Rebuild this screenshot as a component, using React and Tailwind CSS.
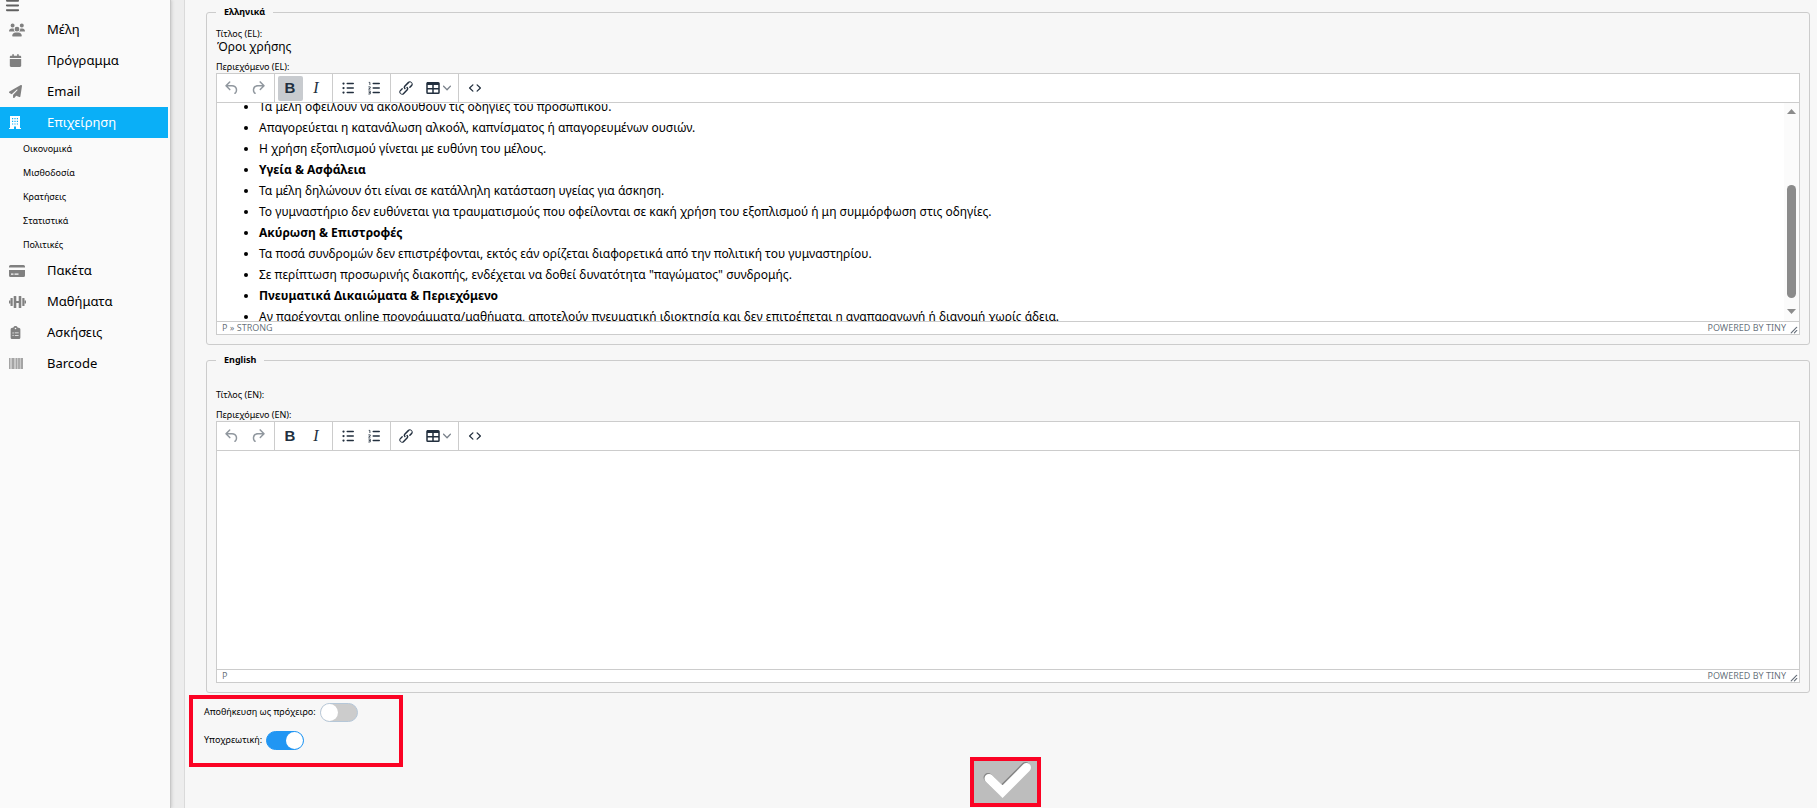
import React, { useState } from 'react';
import { FaBars, FaCalendar, FaClipboardList, FaPaperPlane, FaUsers } from 'react-icons/fa6';

const BuildingIcon = () => (
  <svg width="12" height="13" viewBox="0 0 12 13" fill="currentColor" aria-hidden="true">
    <path
      fillRule="evenodd"
      d="M1 0h10v12h1v1H7v-2.500H5V13H0v-1h1zM3 2v1.200h1.200V2zM5.400 2v1.200h1.200V2zM7.800 2v1.200H9V2zM3 4.700v1.200h1.200V4.700zM5.400 4.700v1.200h1.200V4.700zM7.800 4.700v1.200H9V4.700zM3 7.400v1.200h1.200V7.400zM5.400 7.400v1.200h1.200V7.400zM7.800 7.400v1.200H9V7.400z"
    />
  </svg>
);

const DumbbellIcon = () => (
  <svg width="17" height="12" viewBox="0 0 17 12" fill="currentColor" aria-hidden="true">
    <rect x="0" y="4.500" width="1.500" height="3" />
    <rect x="1.500" y="2" width="2.200" height="8" rx="0.6" />
    <rect x="4.700" y="0" width="2.600" height="12" rx="0.6" />
    <rect x="7" y="5" width="3" height="2" />
    <rect x="9.700" y="0" width="2.600" height="12" rx="0.6" />
    <rect x="13.300" y="2" width="2.200" height="8" rx="0.6" />
    <rect x="15.500" y="4.500" width="1.500" height="3" />
  </svg>
);

const CardIcon = () => (
  <svg width="16" height="12" viewBox="0 0 16 12" fill="currentColor" aria-hidden="true">
    <path d="M1.500 0h13A1.500 1.500 0 0 1 16 1.500V2.500H0V1.500A1.500 1.500 0 0 1 1.500 0z" />
    <path
      fillRule="evenodd"
      d="M0 5h16v5.500a1.500 1.500 0 0 1-1.500 1.500h-13A1.500 1.500 0 0 1 0 10.500zM2 8.500v1.200h2.500V8.500zM5.500 8.500v1.200h4V8.500z"
    />
  </svg>
);

const BarcodeIcon = () => (
  <svg width="14" height="11" viewBox="0 0 14 11" fill="currentColor" aria-hidden="true">
    <rect width="14" height="11" opacity="0.4" />
    <rect x="0" width="1" height="11" opacity="0.5" />
    <rect x="3" width="2" height="11" opacity="0.5" />
    <rect x="7" width="1" height="11" opacity="0.5" />
    <rect x="9" width="2" height="11" opacity="0.4" />
    <rect x="12" width="2" height="11" opacity="0.5" />
  </svg>
);

const businessLinks = ['Οικονομικά', 'Μισθοδοσία', 'Κρατήσεις', 'Στατιστικά', 'Πολιτικές'];

const menu = [
  { label: 'Μέλη', icon: <FaUsers size={16} /> },
  { label: 'Πρόγραμμα', icon: <FaCalendar size={13} /> },
  { label: 'Email', icon: <FaPaperPlane size={13} /> },
  { label: 'Επιχείρηση', icon: <BuildingIcon />, active: true, children: businessLinks },
  { label: 'Πακέτα', icon: <CardIcon /> },
  { label: 'Μαθήματα', icon: <DumbbellIcon /> },
  { label: 'Ασκήσεις', icon: <FaClipboardList size={13} /> },
  { label: 'Barcode', icon: <BarcodeIcon /> },
];

const Sidebar = () => (
  <nav className="w-[171px] shrink-0 border-r border-[#c8c8c8] bg-[#fafafa] pr-[2px] shadow-[1px_0_3px_#cccccc]">
    <button type="button" aria-label="Menu" className="flex h-[14px] items-start pl-[5px] text-[#606060]">
      <FaBars size={15} className="-mt-[2px]" />
    </button>
    <ul>
      {menu.map((item) => (
        <li key={item.label}>
          <a
            href="#"
            className={`flex h-[31px] items-center text-[13px] ${
              item.active ? 'bg-[#0aaff7] text-white' : 'text-black'
            }`}
          >
            <span className={`flex w-[47px] items-center pl-[9px] ${item.active ? 'text-white' : 'text-[#808080]'}`}>
              {item.icon}
            </span>
            {item.label}
          </a>
          {item.children && (
            <ul className="-my-px flex flex-col gap-px">
              {item.children.map((child) => (
                <li key={child}>
                  <a href="#" className="flex h-[23px] items-center pl-[23px] text-[9px] text-black">
                    {child}
                  </a>
                </li>
              ))}
            </ul>
          )}
        </li>
      ))}
    </ul>
  </nav>
);

const Icon = ({ d }) => (
  <svg width="18" height="18" viewBox="0 0 24 24" fill="currentColor" aria-hidden="true">
    <path d={d} />
  </svg>
);

const UNDO =
  'M6.4 8H12c3.7 0 6.2 2 6.8 5.1.6 2.7-.4 5.6-2.3 6.8a1 1 0 01-1-1.8c1.1-.6 1.8-2.7 1.4-4.6-.5-2.1-2.1-3.500-4.9-3.500H6.4l3.3 3.3a1 1 0 11-1.4 1.4l-5-5a1 1 0 010-1.4l5-5a1 1 0 011.4 1.4L6.4 8z';
const REDO =
  'M17.6 10H12c-2.8 0-4.4 1.4-4.9 3.5-.4 2 .3 4 1.4 4.6a1 1 0 11-1 1.8c-2-1.2-2.9-4.1-2.3-6.8.6-3 3-5.1 6.8-5.1h5.6l-3.3-3.3a1 1 0 111.4-1.4l5 5a1 1 0 010 1.4l-5 5a1 1 0 01-1.4-1.4l3.3-3.3z';
const LINK =
  'M6.2 12.3a1 1 0 011.4 1.4l-2 2a2 2 0 102.6 2.8l4.8-4.8a1 1 0 000-1.4 1 1 0 111.4-1.3 2.9 2.9 0 010 4L9.6 20a3.9 3.9 0 01-5.5-5.5l2-2zm11.6-.6a1 1 0 01-1.4-1.4l2-2a2 2 0 10-2.6-2.8L11 10.3a1 1 0 000 1.4A1 1 0 119.6 13a2.9 2.9 0 010-4L14.4 4a3.9 3.9 0 015.5 5.5l-2 2z';
const TABLE =
  'M19 4a2 2 0 012 2v12a2 2 0 01-2 2H5a2 2 0 01-2-2V6c0-1.1.9-2 2-2h14zM5 14v4h6v-4H5zm14 0h-6v4h6v-4zm0-6h-6v4h6V8zM5 12h6V8H5v4z';
const SOURCE =
  'M9.8 15.7c.3.3.3.8 0 1-.3.4-.9.4-1.2 0l-4.4-4.1a.8.8 0 010-1.2l4.4-4.2c.3-.3.9-.3 1.2 0 .3.3.3.8 0 1.1L6 12l3.8 3.7zM14.2 15.7c-.3.3-.3.8 0 1 .4.4.9.4 1.2 0l4.4-4.1c.3-.3.3-.8 0-1.2l-4.4-4.2a.8.8 0 00-1.2 0c-.3.3-.3.8 0 1.1L18 12l-3.8 3.7z';
const LINES =
  'M11 5h8c.6 0 1 .4 1 1s-.4 1-1 1h-8a1 1 0 010-2zm0 6h8c.6 0 1 .4 1 1s-.4 1-1 1h-8a1 1 0 010-2zm0 6h8c.6 0 1 .4 1 1s-.4 1-1 1h-8a1 1 0 010-2z';

const BulletListIcon = () => (
  <svg width="18" height="18" viewBox="0 0 24 24" fill="currentColor" aria-hidden="true">
    <path d={LINES} />
    <circle cx="6" cy="6" r="1.5" />
    <circle cx="6" cy="12" r="1.5" />
    <circle cx="6" cy="18" r="1.5" />
  </svg>
);

const NumberListIcon = () => (
  <svg width="18" height="18" viewBox="0 0 24 24" fill="currentColor" aria-hidden="true">
    <path d={LINES} />
    <path
      d="M5 4.500h1.500V8M4.500 10.500h2.500v1.300l-2.200 1.700h2.500M4.500 16h2.500v4H4.500M5 18h2"
      fill="none"
      stroke="currentColor"
      strokeWidth="1.1"
    />
  </svg>
);

const ToolButton = ({ label, active, disabled, wide, children }) => (
  <button
    type="button"
    aria-label={label}
    disabled={disabled}
    className={`flex h-[25px] items-center justify-center rounded-[2px] pr-px ${wide ? 'w-[35px]' : 'w-[25px]'} ${
      active ? 'bg-[#c8cbcf]' : ''
    } ${disabled ? 'text-[#222f3e]/50' : 'text-[#222f3e]'}`}
  >
    {children}
  </button>
);

const ToolGroup = ({ last, children }) => (
  <div className={`flex items-center gap-px ${last ? 'px-1' : 'border-r border-[#cccccc] px-[3px]'}`}>{children}</div>
);

const Toolbar = ({ boldActive }) => (
  <div className="flex h-[29px] border-b border-[#cccccc]">
    <ToolGroup>
      <ToolButton label="Undo" disabled>
        <Icon d={UNDO} />
      </ToolButton>
      <ToolButton label="Redo" disabled>
        <Icon d={REDO} />
      </ToolButton>
    </ToolGroup>
    <ToolGroup>
      <ToolButton label="Bold" active={boldActive}>
        <span className="font-['Liberation_Sans',sans-serif] text-[15px] font-bold">B</span>
      </ToolButton>
      <ToolButton label="Italic">
        <span className="font-['Liberation_Serif',serif] text-[16px] italic">I</span>
      </ToolButton>
    </ToolGroup>
    <ToolGroup>
      <ToolButton label="Bullet list">
        <BulletListIcon />
      </ToolButton>
      <ToolButton label="Numbered list">
        <NumberListIcon />
      </ToolButton>
    </ToolGroup>
    <ToolGroup>
      <ToolButton label="Link">
        <Icon d={LINK} />
      </ToolButton>
      <ToolButton label="Table" wide>
        <Icon d={TABLE} />
        <svg width="8" height="8" viewBox="0 0 10 10" className="ml-px opacity-60" fill="currentColor" aria-hidden="true">
          <path d="M8.7 2.2c.3-.3.8-.3 1 0 .4.4.4.9 0 1.2L5.7 7.8c-.3.3-.9.3-1.2 0L.2 3.4a.8.8 0 010-1.2c.3-.3.8-.3 1.1 0L5 6l3.7-3.8z" />
        </svg>
      </ToolButton>
    </ToolGroup>
    <ToolGroup last>
      <ToolButton label="Source code">
        <Icon d={SOURCE} />
      </ToolButton>
    </ToolGroup>
  </div>
);

const ScrollTrack = () => (
  <div className="flex w-[15px] shrink-0 flex-col items-center bg-[#fbfbfb] pt-[6px] pb-[7px] text-[#8b8b8b]" aria-hidden="true">
    <svg width="9" height="5" viewBox="0 0 9 5" fill="currentColor">
      <path d="M4.500 0L9 5H0z" />
    </svg>
    <div className="mt-auto mb-[11px] h-[113px] w-[9px] rounded-full bg-[#8b8b8b]" />
    <svg width="9" height="5" viewBox="0 0 9 5" fill="currentColor">
      <path d="M0 0h9L4.500 5z" />
    </svg>
  </div>
);

const Editor = ({ label, path, boldActive, scroll, children }) => (
  <div className="border border-[#cccccc] bg-white">
    <Toolbar boldActive={boldActive} />
    <div className="flex h-[218px] overflow-hidden">
      <div
        role="textbox"
        aria-multiline="true"
        aria-label={label}
        contentEditable
        suppressContentEditableWarning
        className="flex-1 overflow-hidden outline-none"
      >
        {children}
      </div>
      {scroll && <ScrollTrack />}
    </div>
    <div className="flex h-[13px] items-center border-t border-[#cccccc] pl-[5px] text-[9px] leading-[12px] text-[#222f3e]/70">
      <span>{path}</span>
      <a href="#" className="ml-auto">
        POWERED BY TINY
      </a>
      <svg width="8" height="8" viewBox="0 0 10 10" className="mr-px ml-[4px] self-end" fill="currentColor" aria-hidden="true">
        <path d="M8.1 1.1A.5.5 0 119 2l-7 7A.5.5 0 111 8l7-7zM8.1 5.1A.5.5 0 119 6l-3 3A.5.5 0 115 8l3-3z" />
      </svg>
    </div>
  </div>
);

const terms = [
  { text: 'Τα μέλη οφείλουν να ακολουθούν τις οδηγίες του προσωπικού.' },
  { text: 'Απαγορεύεται η κατανάλωση αλκοόλ, καπνίσματος ή απαγορευμένων ουσιών.' },
  { text: 'Η χρήση εξοπλισμού γίνεται με ευθύνη του μέλους.' },
  { text: 'Υγεία & Ασφάλεια', strong: true },
  { text: 'Τα μέλη δηλώνουν ότι είναι σε κατάλληλη κατάσταση υγείας για άσκηση.' },
  { text: 'Το γυμναστήριο δεν ευθύνεται για τραυματισμούς που οφείλονται σε κακή χρήση του εξοπλισμού ή μη συμμόρφωση στις οδηγίες.' },
  { text: 'Ακύρωση & Επιστροφές', strong: true },
  { text: 'Τα ποσά συνδρομών δεν επιστρέφονται, εκτός εάν ορίζεται διαφορετικά από την πολιτική του γυμναστηρίου.' },
  { text: 'Σε περίπτωση προσωρινής διακοπής, ενδέχεται να δοθεί δυνατότητα "παγώματος" συνδρομής.' },
  { text: 'Πνευματικά Δικαιώματα & Περιεχόμενο', strong: true },
  { text: 'Αν παρέχονται online προγράμματα/μαθήματα, αποτελούν πνευματική ιδιοκτησία και δεν επιτρέπεται η αναπαραγωγή ή διανομή χωρίς άδεια.' },
];

// The label floats above the title once the input has a value
const LanguageSection = ({ name, code, initialTitle, children }) => {
  const [title, setTitle] = useState(initialTitle);

  return (
    <fieldset className="min-w-0 rounded-[3px] border border-[#cccccc] px-[9px] pb-[9px]">
      <legend className="px-2 text-[9px] leading-[14px] font-bold text-black">{name}</legend>
      <div className="flex flex-col-reverse pt-[9px]">
        <input
          id={`title-${code}`}
          type="text"
          placeholder=" "
          value={title}
          onChange={(e) => setTitle(e.target.value)}
          className="peer h-[14px] w-full bg-transparent px-px text-[12px] leading-[14px] text-black outline-none"
        />
        <label
          htmlFor={`title-${code}`}
          className="pointer-events-none h-3 text-[9px] leading-[12px] text-black peer-placeholder-shown:translate-y-[13px]"
        >
          Τίτλος ({code}):
        </label>
      </div>
      <div className="mt-[7px] h-[12px] text-[9px] leading-[12px] text-black">Περιεχόμενο ({code}):</div>
      {children}
    </fieldset>
  );
};

const Switch = ({ id, label, defaultChecked }) => (
  <div className="flex h-[26px] items-center gap-[4px]">
    <label htmlFor={id} className="text-[9px] text-black">
      {label}
    </label>
    <input
      id={id}
      type="checkbox"
      role="switch"
      defaultChecked={defaultChecked}
      className="h-[19px] w-[38px] appearance-none rounded-full border border-[#b5c7d8] bg-[#cccccc] before:block before:size-[17px] before:rounded-full before:bg-white checked:border-[#2196f3] checked:bg-[#2196f3] checked:before:translate-x-[19px]"
    />
  </div>
);

const App = () => {
  return (
    <div className="flex min-h-screen bg-[#ededed] font-['Noto_Sans',sans-serif]">
      <Sidebar />
      <main className="ml-[13px] min-w-0 flex-1 border-l border-[#dadada] bg-[#f7f7f7] pt-[5px] pr-[7px] pl-1">
        <div className="ml-[17px] flex flex-col gap-[8px]">
          <LanguageSection name="Ελληνικά" code="EL" initialTitle="Όροι χρήσης">
            <Editor label="Περιεχόμενο (EL)" path="P » STRONG" boldActive scroll>
              <ul className="-mt-[7px] list-disc pl-[42px] text-[12px] leading-[21px] text-black">
                {terms.map((term) => (
                  <li key={term.text}>{term.strong ? <strong>{term.text}</strong> : term.text}</li>
                ))}
              </ul>
            </Editor>
          </LanguageSection>
          <LanguageSection name="English" code="EN" initialTitle="">
            <Editor label="Περιεχόμενο (EN)" path="P" />
          </LanguageSection>
        </div>

        <div className="mt-[2px] flex h-[72px] w-[214px] flex-col gap-[2px] border-4 border-[#fb0324] pl-[11px]">
          <Switch id="draft" label="Αποθήκευση ως πρόχειρο:" />
          <Switch id="mandatory" label="Υποχρεωτική:" defaultChecked />
        </div>

        <div className="-mt-[10px] flex justify-center pl-3">
          <button
            type="button"
            aria-label="Save"
            className="flex h-[50px] w-[71px] items-center justify-center border-4 border-[#fb0324] bg-[#bdbdbd]"
          >
            <svg width="49" height="38" viewBox="0 0 49 38" className="overflow-visible" aria-hidden="true">
              <path d="M7 14.500L20.500 27.500L44.500 3.500" fill="none" stroke="#858585" strokeWidth="9" strokeLinecap="round" />
              <path d="M8 15.500L21.500 28.600L45.500 4.500" fill="none" stroke="#ffffff" strokeWidth="9" strokeLinecap="round" />
            </svg>
          </button>
        </div>
      </main>
    </div>
  );
};

export default App;
